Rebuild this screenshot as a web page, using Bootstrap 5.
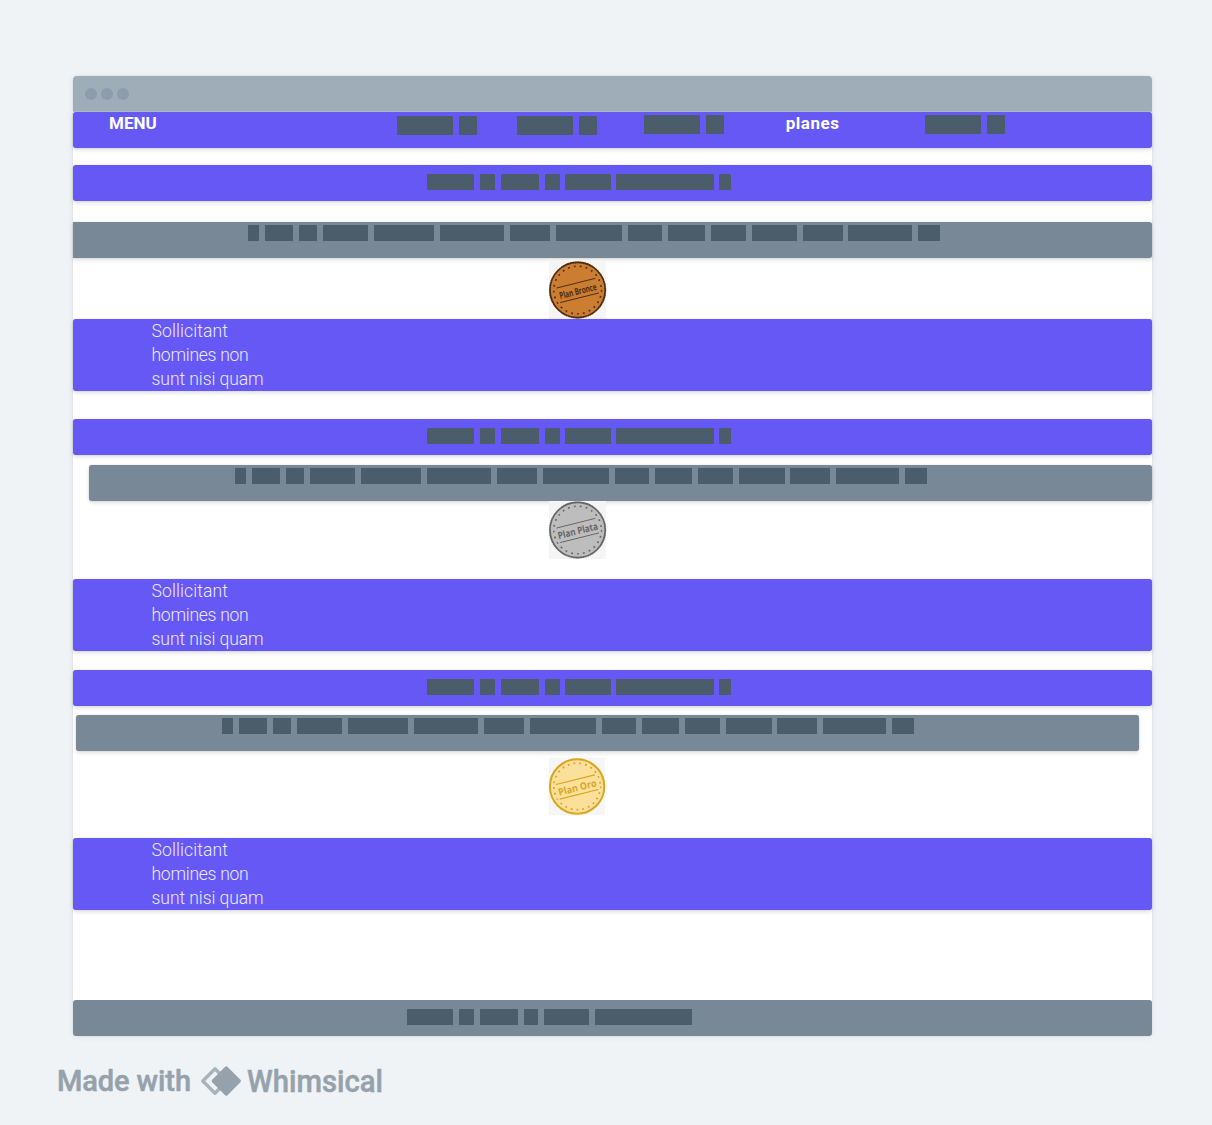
<!DOCTYPE html>
<html lang="es">
<head>
<meta charset="utf-8">
<meta name="viewport" content="width=device-width, initial-scale=1">
<title>Planes</title>
<link rel="stylesheet" href="https://cdn.jsdelivr.net/npm/bootstrap@5.3.0/dist/css/bootstrap.min.css">
<style>
  body { background: #eff3f6; font-family: Roboto, "Liberation Sans", sans-serif; width: 1212px; height: 1125px; overflow: hidden; padding: 76px 60px 0 73px; }
  .window { width: 1079px; height: 960px; border-radius: 4px; box-shadow: 0 0 2px rgba(40,60,80,.12), 0 1px 6px rgba(40,60,80,.07); }
  .titlebar { height: 36px; background: #9eadb8; border-radius: 4px 4px 0 0; border-bottom: 1px solid #b4c0ca; padding-left: 12px; gap: 4px; }
  .dot { width: 12px; height: 12px; border-radius: 50%; background: #8d9dab; }
  .bar { height: 36px; border-radius: 3px; box-shadow: 0 0 1px rgba(0,0,0,.3), 0 2px 4px rgba(0,0,0,.13); flex: none; }
  .bar-violet { background: #6558f5; color: #fff; }
  .bar-slate { background: #788896; }
  .bar-tall { height: 72px; padding-left: 78.5px; font-weight: 300; font-size: 17.6px; line-height: 24px; }
  .bar-tall div { height: 24px; white-space: nowrap; color: #eceaff; }
  .l1 { letter-spacing: .07px; } .l2 { letter-spacing: -.3px; } .l3 { letter-spacing: -.1px; }
  .words { gap: 5.9px; height: 15.3px; margin-top: 3.3px; }
  .words i { background: #4b5d6b; flex: none; border-radius: .5px; }
  .title-words { margin: 9.4px 0 0 354.2px; }
  .nav-words { height: 18.7px; margin-top: 3.9px; }
  .nav-words.raised { margin-top: 2.9px; }
  .nav-text { font-weight: 700; font-size: 17px; line-height: 23px; white-space: nowrap; flex: none; }
  .n0 { margin-left: 36px; width: 288px; } .n1 { width: 120.4px; } .n2 { width: 127.1px; }
  .n3 { width: 141.3px; } .n4 { width: 139.3px; letter-spacing: .5px; }
  .mt-title { margin-top: 17px; }
  .desc-a { margin-top: 21px; padding-left: 174.7px; border-radius: 0 3px 3px 0; }
  .desc-b { margin: 10px 0 0 16px; padding-left: 145.8px; }
  .desc-c { margin: 9px 13px 0 3px; padding-left: 145.8px; }
  .stamp { width: 57px; height: 58px; margin-left: 476.2px; flex: none; display: block; overflow: visible; }
  .stamp text { font-family: "Open Sans", sans-serif; font-weight: 700; }
  .made { margin: 24px 0 0 -17px; display: block; }
  .foot-words { margin: 9.4px 0 0 333.6px; }
</style>
<script src="https://cdn.jsdelivr.net/npm/bootstrap@5.3.0/dist/js/bootstrap.bundle.min.js"></script>
</head>
<body>
<main class="window bg-white d-flex flex-column">
  <header class="titlebar d-flex align-items-center flex-shrink-0"><span class="dot"></span><span class="dot"></span><span class="dot"></span></header>
  <nav class="bar bar-violet d-flex align-items-start">
    <div class="nav-text n0">MENU</div>
    <div class="n1"><div class="words nav-words d-flex" data-words="56 18"></div></div>
    <div class="n2"><div class="words nav-words d-flex" data-words="56 18"></div></div>
    <div class="n3"><div class="words nav-words raised d-flex" data-words="56 18"></div></div>
    <div class="nav-text n4">planes</div>
    <div><div class="words nav-words raised d-flex" data-words="56 18"></div></div>
  </nav>

  <section class="bar bar-violet d-flex mt-title"><div class="words title-words d-flex" data-set="title"></div></section>
  <section class="bar bar-slate desc-a"><div class="words d-flex" data-set="long"></div></section>
  <svg class="stamp" style="margin-top:3px" viewBox="0 0 57 58"><rect width="57" height="58" fill="#f6f5f4"/><g transform="translate(28.6 29)" fill="none" stroke="#4e2d12"><circle r="27.6" fill="#cb7d31" stroke-width="1.7"/><circle r="28.2" stroke-width=".8" stroke-dasharray="1.3 1.2"/><circle r="23.8" stroke-width="1.6" stroke-dasharray="1.8 4.18"/><g transform="rotate(-14)"><path d="M-22 -7.5H22V8H-22Z" fill="#cb7d31"  stroke="none"/><path d="M-20 -7H20M-20 8H20" stroke-width=".9"/><text x="-19" y="4.6" font-size="9.4" textLength="38" lengthAdjust="spacingAndGlyphs" fill="#4e2d12" stroke="none">Plan Bronce</text></g></g></svg>
  <section class="bar bar-violet bar-tall"><div><span class="l1">Sollicitant</span></div><div><span class="l2">homines non</span></div><div><span class="l3">sunt nisi quam</span></div></section>

  <section class="bar bar-violet d-flex" style="margin-top:28px"><div class="words title-words d-flex" data-set="title"></div></section>
  <section class="bar bar-slate desc-b"><div class="words d-flex" data-set="long"></div></section>
  <svg class="stamp" viewBox="0 0 57 58"><rect width="57" height="58" fill="#f5f5f5"/><g transform="translate(28.6 29)" fill="none" stroke="#666"><circle r="27.6" fill="#bdbdbd" stroke-width="1.7"/><circle r="28.2" stroke-width=".8" stroke-dasharray="1.3 1.2"/><circle r="23.8" stroke-width="1.6" stroke-dasharray="1.8 4.18"/><g transform="rotate(-14)"><path d="M-22 -7.5H22V8H-22Z" fill="#bdbdbd" stroke="none"/><path d="M-20 -7H20M-20 8H20" stroke-width=".9"/><text x="-20.5" y="4.3" font-size="9.8" textLength="41" lengthAdjust="spacingAndGlyphs" fill="#666" stroke="none">Plan Plata</text></g></g></svg>
  <section class="bar bar-violet bar-tall" style="margin-top:20px"><div><span class="l1">Sollicitant</span></div><div><span class="l2">homines non</span></div><div><span class="l3">sunt nisi quam</span></div></section>

  <section class="bar bar-violet d-flex" style="margin-top:19px"><div class="words title-words d-flex" data-set="title"></div></section>
  <section class="bar bar-slate desc-c"><div class="words d-flex" data-set="long"></div></section>
  <svg class="stamp" style="margin-top:7px" viewBox="0 0 57 58"><rect width="56" height="57" fill="#f6f6f5"/><g transform="translate(28.1 28.5)" fill="none" stroke="#dba51f"><circle r="27.2" fill="#fae09a" stroke-width="2"/><circle r="23.3" stroke-width="1.7" stroke-dasharray="1.8 4.06"/><g transform="rotate(-14)"><path d="M-22 -7.5H22V8H-22Z" fill="#fae09a" stroke="none"/><path d="M-20 -7H20M-20 8H20" stroke-width="1.1"/><text x="-19.5" y="4.6" font-size="9.8" textLength="39" lengthAdjust="spacingAndGlyphs" fill="#dba51f" stroke="none">Plan Oro</text></g></g></svg>
  <section class="bar bar-violet bar-tall" style="margin-top:22px"><div><span class="l1">Sollicitant</span></div><div><span class="l2">homines non</span></div><div><span class="l3">sunt nisi quam</span></div></section>

  <footer class="bar bar-slate d-flex mt-auto shadow-none"><div class="words foot-words d-flex" data-words="46.8 15 38.2 14.2 45 96.8"></div></footer>
</main>
<svg class="made" width="340" height="44" viewBox="56 1060 340 44" fill="#95a2ac" font-family="Roboto, sans-serif">
  <text x="57" y="1091" font-size="29" font-weight="500" stroke="#95a2ac" stroke-width=".5" textLength="134" lengthAdjust="spacing">Made with</text>
  <path d="M215 1068.8L202.8 1081L215 1093.2L227 1081Z" fill="none" stroke="#a8b4bd" stroke-width="3.4" stroke-linejoin="round"/>
  <path d="M226.3 1068L239.3 1081L226.3 1094L213.3 1081Z" stroke="#95a2ac" stroke-width="3.2" stroke-linejoin="round"/>
  <text x="247" y="1091.5" font-size="30.5" font-weight="500" stroke="#95a2ac" stroke-width=".5" textLength="136" lengthAdjust="spacingAndGlyphs">Whimsical</text>
</svg>
<script>
  // Word widths of the placeholder copy
  const sets = {
    title: "47.2 15.1 38.2 14.2 45.1 97.2 11.2",
    long: "11.2 28.4 17.9 45.2 60.2 64.1 40.2 66.1 34 37.1 34.8 45.9 39.2 63.2 22.2"
  };
  document.querySelectorAll(".words").forEach(el => {
    (el.dataset.words || sets[el.dataset.set]).split(" ").forEach(w => {
      const block = document.createElement("i");
      block.style.width = w + "px";
      el.append(block);
    });
  });
</script>
</body>
</html>
